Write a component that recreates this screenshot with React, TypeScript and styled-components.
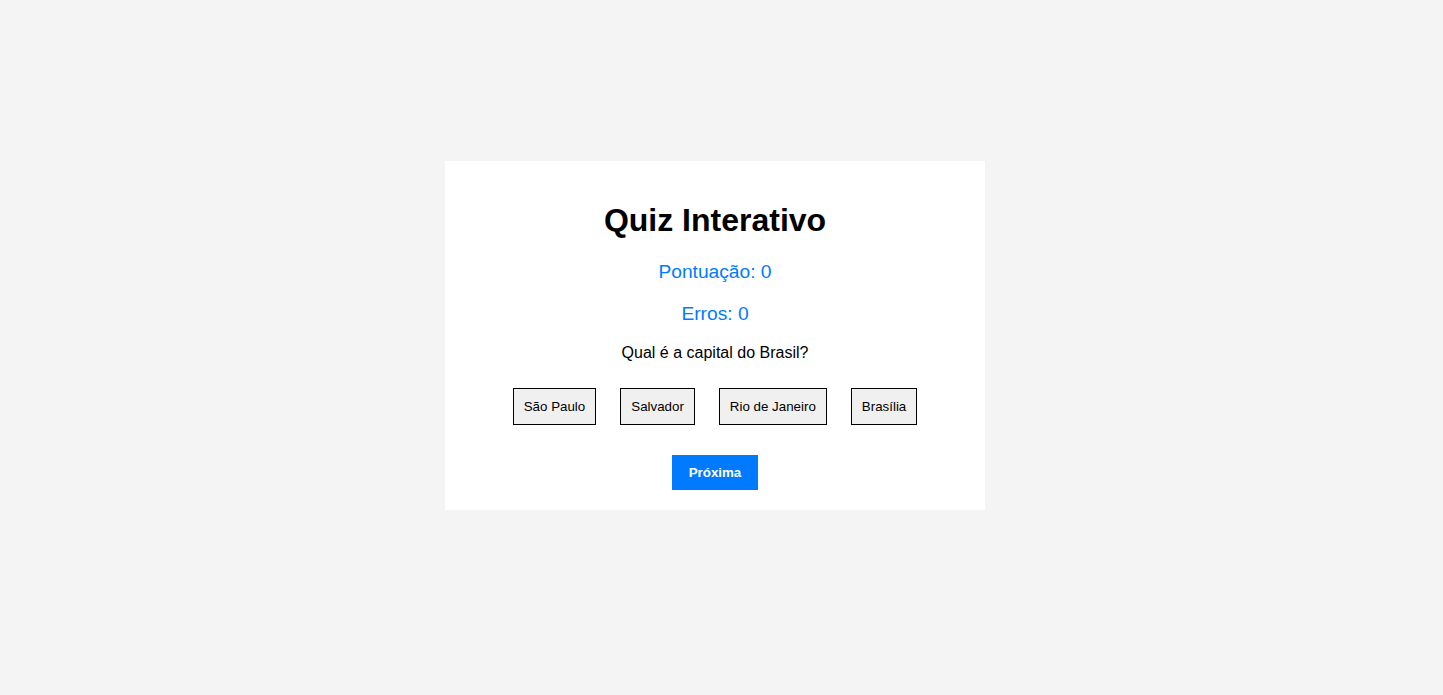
import React from "react";
import styled, { createGlobalStyle } from "styled-components";

const GlobalStyle = createGlobalStyle`
  html, body {
    margin: 0;
    padding: 0;
    background: #f4f4f4;
    font-family: "Liberation Sans", Arial, sans-serif;
  }
`;

const Page = styled.div`
  display: flex;
  justify-content: center;
  align-items: flex-start;
  padding: 161px 13px 0 0;
  min-height: 100vh;
  box-sizing: border-box;
`;

const Card = styled.div`
  width: 540px;
  box-sizing: border-box;
  background: #ffffff;
  padding: 20px;
  text-align: center;
`;

const Title = styled.h1`
  font-size: 32px;
  font-weight: bold;
  margin: 21.44px 0;
  color: #000;
`;

const Stat = styled.p`
  font-size: 19.2px;
  color: #007bff;
  margin: 19.7px 0;
`;

const Question = styled.p`
  font-size: 16px;
  color: #000;
  margin: 16px 0;
`;

const Options = styled.div`
  display: flex;
  justify-content: center;
  gap: 24px;
  margin: 25.5px 0 10px;
`;

const OptionButton = styled.button`
  font-family: "Liberation Sans", Arial, sans-serif;
  font-size: 13.333px;
  line-height: 15px;
  padding: 10px;
  background: #f0f0f0;
  border: 1px solid #000;
  color: #000;
  cursor: pointer;
`;

const NextButton = styled.button`
  font-family: "Liberation Sans", Arial, sans-serif;
  font-size: 13.333px;
  font-weight: bold;
  line-height: 15px;
  padding: 10px 17px;
  margin-top: 20px;
  background: #007bff;
  color: #fff;
  border: none;
  cursor: pointer;
`;

const options = ["São Paulo", "Salvador", "Rio de Janeiro", "Brasília"];

export default function App() {
  return (
    <>
      <GlobalStyle />
      <Page>
        <Card>
          <Title>Quiz Interativo</Title>
          <Stat>Pontuação: 0</Stat>
          <Stat>Erros: 0</Stat>
          <Question>Qual é a capital do Brasil?</Question>
          <Options>
            {options.map((o) => (
              <OptionButton key={o}>{o}</OptionButton>
            ))}
          </Options>
          <NextButton>Próxima</NextButton>
        </Card>
      </Page>
    </>
  );
}
